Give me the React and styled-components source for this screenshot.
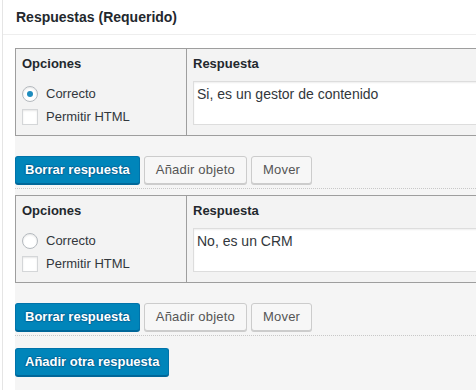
import React from "react";
import styled, { createGlobalStyle } from "styled-components";

const Global = createGlobalStyle`
  html, body { margin: 0; padding: 0; background: #fff; overflow: hidden; }
  body { font-family: "Liberation Sans", Arial, sans-serif; color: #23282d; }
  * { box-sizing: border-box; }
`;

const Page = styled.div`
  width: 476px;
  height: 390px;
  overflow: hidden;
  padding-left: 2px;
  background: #fff;
`;

const Panel = styled.div`
  width: 560px;
  min-height: 390px;
  border-left: 1px solid #e5e5e5;
  background: #fff;
`;

const PanelHeader = styled.h2`
  margin: 0;
  height: 35px;
  padding: 0 0 0 13px;
  border-bottom: 1px solid #eee;
  display: flex;
  align-items: center;
  font-size: 14px;
  font-weight: 700;
  color: #23282d;
`;

const PanelBody = styled.div`
  padding: 13px 0 0 12px;
`;

const AnswerList = styled.div`
  background: #f5f5f5;
  min-height: 400px;
`;

const AnswerBlock = styled.div`
  padding-bottom: 4px;
  border-bottom: 1px dotted #c8c8c8;
  & + & {
    margin-top: 6px;
  }
`;

const Table = styled.div`
  display: grid;
  grid-template-columns: 171px 1fr;
  border: 1px solid #9e9e9e;
  height: 88px;
  background: #f3f3f3;
`;

const Cell = styled.div`
  padding: 6px 6px 0 6px;
  border-right: ${(p) => (p.$divider ? "1px solid #9e9e9e" : "none")};
`;

const CellTitle = styled.div`
  font-size: 13px;
  font-weight: 700;
  line-height: 18px;
  color: #23282d;
`;

const Options = styled.div`
  margin-top: 9px;
`;

const OptionRow = styled.label`
  display: flex;
  align-items: center;
  height: 23px;
  font-size: 13px;
  color: #32373c;
  gap: 8px;
`;

const Radio = styled.span`
  width: 16px;
  height: 16px;
  border-radius: 50%;
  border: 1px solid #b4b9be;
  background: #fff;
  box-shadow: inset 0 1px 2px rgba(0, 0, 0, 0.1);
  display: flex;
  align-items: center;
  justify-content: center;
  &::after {
    content: "";
    display: ${(p) => (p.$checked ? "block" : "none")};
    width: 6px;
    height: 6px;
    border-radius: 50%;
    background: #1e8cbe;
  }
`;

const Checkbox = styled.span`
  width: 16px;
  height: 16px;
  border: 1px solid #d4d6d8;
  background: #fff;
  box-shadow: inset 0 1px 2px rgba(0, 0, 0, 0.1);
`;

const TextArea = styled.div`
  margin-top: 8px;
  height: 44px;
  border: 1px solid #ddd;
  background: #fff;
  box-shadow: inset 0 1px 2px rgba(0, 0, 0, 0.07);
  padding: 2px 3px;
  font-size: 14px;
  line-height: 20px;
  color: #32373c;
`;

const ButtonRow = styled.div`
  display: flex;
  gap: 4px;
  margin-top: 20px;
`;

const Button = styled.button`
  height: 28px;
  padding: 0 ${(p) => (p.$primary ? "9px" : "11px")};
  border-radius: 3px;
  font-family: "Liberation Sans", Arial, sans-serif;
  font-size: 13px;
  line-height: 26px;
  letter-spacing: ${(p) => (p.$primary ? "0" : "0.2px")};
  font-weight: ${(p) => (p.$primary ? 700 : 400)};
  cursor: pointer;
  border: 1px solid ${(p) => (p.$primary ? "#0073aa" : "#ccc")};
  border-bottom-color: ${(p) => (p.$primary ? "#006799" : "#ccc")};
  background: ${(p) => (p.$primary ? "#0085ba" : "#f7f7f7")};
  color: ${(p) => (p.$primary ? "#fff" : "#555")};
  box-shadow: 0 1px 0 ${(p) => (p.$primary ? "#006799" : "#ccc")};
  text-shadow: ${(p) =>
    p.$primary
      ? "0 -1px 1px #006799, 1px 0 1px #006799, 0 1px 1px #006799, -1px 0 1px #006799"
      : "none"};
`;

const Footer = styled.div`
  padding-top: 12px;
`;

const answers = [
  { text: "Si, es un gestor de contenido", correct: true },
  { text: "No, es un CRM", correct: false },
];

function Answer({ text, correct }) {
  return (
    <AnswerBlock>
      <Table>
        <Cell $divider>
          <CellTitle>Opciones</CellTitle>
          <Options>
            <OptionRow>
              <Radio $checked={correct} />
              Correcto
            </OptionRow>
            <OptionRow>
              <Checkbox />
              Permitir HTML
            </OptionRow>
          </Options>
        </Cell>
        <Cell>
          <CellTitle>Respuesta</CellTitle>
          <TextArea>{text}</TextArea>
        </Cell>
      </Table>
      <ButtonRow>
        <Button $primary>Borrar respuesta</Button>
        <Button>Añadir objeto</Button>
        <Button>Mover</Button>
      </ButtonRow>
    </AnswerBlock>
  );
}

export default function App() {
  return (
    <Page>
      <Global />
      <Panel>
        <PanelHeader>Respuestas (Requerido)</PanelHeader>
        <PanelBody>
          <AnswerList>
            {answers.map((a, i) => (
              <Answer key={i} {...a} />
            ))}
            <Footer>
              <Button $primary>Añadir otra respuesta</Button>
            </Footer>
          </AnswerList>
        </PanelBody>
      </Panel>
    </Page>
  );
}
